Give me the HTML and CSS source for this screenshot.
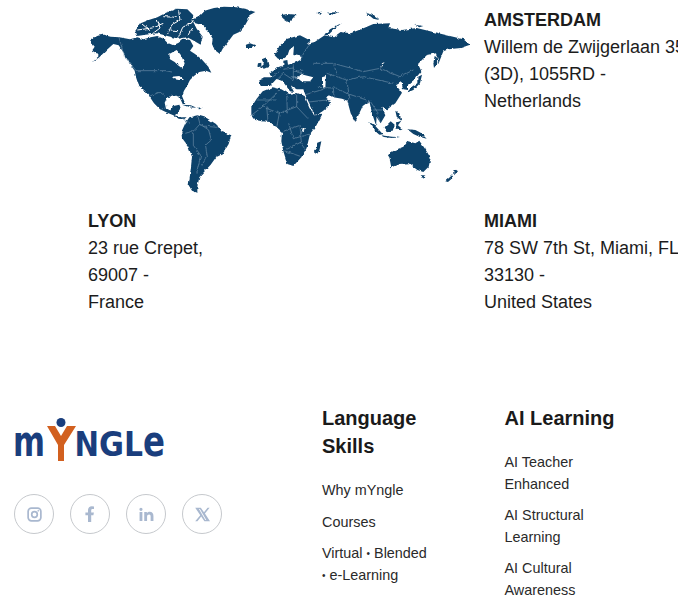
FILE: index.html
```html
<!DOCTYPE html>
<html lang="en">
<head>
    <meta charset="UTF-8">
    <meta name="viewport" content="width=device-width, initial-scale=1.0">
    <title>mYngle</title>
    <link rel="stylesheet" href="styles.css">
</head>
<body>
    <section class="offices">
        <div class="map-cell">
            <svg class="map" viewBox="24 0 1176 600" width="392" height="200" aria-label="World map">
                <defs>
                    <filter id="rough" filterUnits="userSpaceOnUse" x="0" y="0" width="1200" height="600">
                        <feTurbulence type="fractalNoise" baseFrequency="0.07" numOctaves="3" seed="4"/>
                        <feDisplacementMap in="SourceGraphic" scale="9" xChannelSelector="R" yChannelSelector="G"/>
                        <feGaussianBlur stdDeviation="0.7"/>
                    </filter>
                </defs>
                <g filter="url(#rough)">
                <g class="land">
                    <!-- north america -->
                    <path d="M30,122 L48,108 L70,104 L92,110 L118,112 L150,118 L172,112 L190,118 L212,112 L232,108 L250,116 L262,128 L280,136 L296,128 L310,116 L330,120 L340,138 L330,152 L345,162 L365,178 L385,200 L394,218 L378,212 L358,216 L342,228 L330,240 L322,256 L312,272 L306,288 L316,312 L308,312 L298,290 L280,286 L262,292 L254,308 L258,326 L270,332 L280,318 L298,314 L302,324 L292,340 L284,346 L304,352 L320,352 L312,358 L296,356 L280,346 L262,338 L240,328 L222,310 L206,286 L192,270 L176,256 L168,232 L164,212 L148,190 L132,160 L116,136 L100,132 L80,150 L58,172 L38,186 L56,168 L50,160 L36,152 L44,140 Z"/>
                    <!-- arctic islands -->
                    <path d="M166,92 L182,70 L206,60 L232,52 L258,38 L290,26 L322,28 L340,46 L338,62 L350,86 L368,110 L362,134 L344,124 L322,112 L296,116 L262,108 L232,100 L196,104 L172,108 Z"/>
                    <!-- greenland and north atlantic -->
                    <path d="M338,58 L360,48 L374,32 L402,24 L432,20 L470,22 L500,28 L526,36 L508,46 L504,60 L494,78 L478,96 L460,104 L444,126 L428,146 L420,162 L404,150 L396,132 L398,116 L384,92 L368,76 L346,70 Z"/>
                    <path d="M494,136 L510,130 L526,136 L516,144 L498,144 Z M600,46 L622,42 L650,44 L640,56 L628,68 L612,58 Z M712,40 L726,38 L722,44 Z M740,38 L775,36 L760,44 Z M858,38 L876,44 L898,60 L880,56 Z M736,104 L750,88 L786,68 L764,86 L744,106 Z M1002,74 L1030,78 L1018,82 Z"/>
                    <path d="M545,178 L560,172 L566,200 L552,206 L540,204 L552,192 Z M534,190 L544,188 L544,200 L532,200 Z"/>
                    <!-- eurasia -->
                    <path d="M538,240 L552,232 L574,232 L568,218 L588,204 L610,196 L610,182 L622,180 L624,194 L650,186 L664,178 L660,166 L640,162 L642,138 L628,150 L622,168 L608,178 L594,176 L584,166 L598,138 L622,116 L660,106 L692,122 L680,132 L704,126 L734,106 L760,112 L782,96 L812,100 L852,84 L880,72 L930,70 L926,84 L966,90 L1010,84 L1060,96 L1110,108 L1150,118 L1170,134 L1142,144 L1106,148 L1090,154 L1076,190 L1068,160 L1040,166 L1014,192 L1024,214 L1004,238 L984,254 L984,270 L970,268 L964,246 L948,256 L966,278 L946,310 L922,328 L904,320 L916,346 L902,370 L890,352 L888,376 L876,340 L868,304 L848,318 L826,366 L812,340 L802,302 L786,296 L760,292 L746,286 L738,298 L756,304 L748,318 L712,346 L700,336 L686,306 L676,284 L670,268 L650,268 L640,262 L632,256 L642,276 L630,274 L608,244 L590,236 L570,258 L542,258 Z"/>
                    <!-- africa -->
                    <path d="M514,322 L530,296 L548,274 L578,262 L604,268 L628,282 L650,278 L674,288 L688,320 L702,346 L726,344 L708,378 L690,402 L680,444 L664,472 L640,498 L622,492 L610,454 L604,424 L606,396 L590,382 L570,366 L546,364 L526,360 L514,344 Z"/>
                    <!-- south america -->
                    <path d="M304,396 L316,370 L328,352 L352,346 L380,354 L408,372 L426,396 L454,406 L446,432 L428,462 L408,472 L392,494 L372,516 L358,532 L352,560 L352,578 L336,572 L326,556 L332,510 L336,470 L324,438 L306,414 Z"/>
                    <!-- caribbean -->
                    <path d="M306,314 L332,316 L352,324 L328,322 Z M356,322 L368,326 L356,328 Z"/>
                    <!-- oceania, asia islands -->
                    <path d="M924,462 L946,450 L970,440 L984,424 L1006,430 L1018,422 L1036,448 L1052,474 L1046,500 L1030,516 L1012,510 L986,490 L958,492 L934,502 L930,482 Z"/>
                    <path d="M1022,526 L1036,526 L1030,536 Z M1124,506 L1134,514 L1122,526 Z M1116,526 L1120,532 L1104,546 L1096,544 Z"/>
                    <path d="M712,428 L724,424 L718,452 L708,466 L702,456 Z"/>
                    <path d="M868,366 L884,376 L908,402 L898,404 L880,388 Z M902,406 L936,410 L960,412 L936,414 L906,410 Z M914,382 L932,364 L944,374 L938,392 L920,394 Z M948,368 L964,362 L954,376 L968,388 L950,386 Z M982,388 L1006,390 L1022,398 L1040,416 L1018,410 L1000,402 Z M946,332 L958,340 L964,362 L950,350 Z M1064,168 L1070,172 L1072,190 L1062,204 L1060,190 Z M1012,232 L1026,224 L1020,250 L1000,270 L980,278 L998,258 L1012,250 Z"/>
                </g>
                <g class="water">
                    <path d="M268,162 L290,150 L302,164 L314,190 L308,206 L294,196 L284,186 L270,178 Z"/>
                    <path d="M648,230 L670,224 L700,232 L690,244 L664,244 Z M726,232 L738,228 L736,262 L726,254 Z M275,230 L298,228 L312,240 L296,240 L284,238 Z M668,384 L674,384 L672,396 L666,394 Z M906,190 L914,186 L900,204 Z"/>
                </g>
                <path class="channels" d="M172,90 L216,84 L250,70 M214,104 L240,84 L232,60 M262,104 L276,74 L300,60 L296,34 M296,110 L308,82 L340,64 M250,50 L290,52 M322,108 L338,84 M186,72 L210,92 M272,90 L292,92"/>
                <path class="borders" d="M116,112 L134,170 L168,212 L256,212 L276,216 M205,290 L240,276 L254,288 M240,330 L262,316 M304,352 L330,370 M316,400 L342,392 L360,372 L386,390 L394,420 L376,436 L382,470 L366,494 M340,400 L340,436 L362,466 L350,520 M368,378 L412,382 M354,350 L360,372 M514,346 L548,320 L600,270 M546,320 L598,340 L650,320 L650,280 M598,340 L590,382 M650,320 L684,356 M604,396 L660,376 L664,426 L620,448 M626,370 L640,416 L690,402 M660,426 L674,446 M612,452 L664,470 M530,300 L590,300 M560,320 L564,364 M620,280 L622,340 M640,196 L640,240 L610,220 L590,240 M660,178 L690,130 M670,210 L640,216 M610,208 L640,204 L668,226 M600,216 L576,232 M630,230 L660,230 M700,190 L760,190 L850,215 L900,205 L960,230 L1000,210 M740,220 L800,240 L850,230 L940,250 M760,190 L770,220 M800,240 L810,300 M760,260 L800,280 L860,300 M676,284 L730,268 M686,306 L740,300 M712,262 L760,264 M760,264 L762,292 M868,300 L895,340 M880,330 L915,330 M890,340 L900,365"/>
                </g>
            </svg>
        </div>
        <div class="office office-first">
            <strong>AMSTERDAM</strong>
            <p>Willem de Zwijgerlaan 350<br>(3D), 1055RD -<br>Netherlands</p>
        </div>
        <div class="office">
            <strong>LYON</strong>
            <p>23 rue Crepet,<br>69007 -<br>France</p>
        </div>
        <div class="office">
            <strong>MIAMI</strong>
            <p>78 SW 7th St, Miami, FL<br>33130 -<br>United States</p>
        </div>
    </section>

    <footer class="footer">
        <div class="brand">
            <svg class="logo" viewBox="0 0 152 44" width="152" height="44" role="img" aria-label="mYngle">
                <text class="logo-low" x="-1" y="37" textLength="32" lengthAdjust="spacingAndGlyphs">m</text>
                <path class="logo-y" d="M33,7 L41,7 L47,17 L53,7 L62,7 L50,26 L50,42 L44,42 L44,26 Z"/>
                <circle class="logo-dot" cx="47" cy="3.5" r="4.5"/>
                <text class="logo-cap" x="60.5" y="37" textLength="24.5" lengthAdjust="spacingAndGlyphs">N</text>
                <text class="logo-cap" x="85" y="37" textLength="25" lengthAdjust="spacingAndGlyphs">G</text>
                <text class="logo-cap" x="110" y="37" textLength="19" lengthAdjust="spacingAndGlyphs">L</text>
                <text class="logo-low" x="129" y="37" textLength="22" lengthAdjust="spacingAndGlyphs">e</text>
            </svg>
            <div class="socials">
                <a class="social" href="#" aria-label="Instagram">
                    <svg viewBox="0 0 16 16" width="15" height="15"><rect x="1.2" y="1.2" width="13.6" height="13.6" rx="3.5" fill="none" stroke="#a9b8cf" stroke-width="1.8"/><circle cx="8" cy="8" r="3" fill="none" stroke="#a9b8cf" stroke-width="1.8"/><circle cx="12" cy="4" r="0.9" fill="#a9b8cf"/></svg>
                </a>
                <a class="social" href="#" aria-label="Facebook">
                    <svg viewBox="0 0 16 16" width="16" height="16"><path fill="#a9b8cf" d="M6,16 L6,9.2 L3.4,9.2 L3.4,6.4 L6,6.4 L6,4.2 C6,1.6 7.5,0.2 9.8,0.2 L12,0.4 L12,2.9 L10.6,2.9 C9.5,2.9 9.2,3.5 9.2,4.3 L9.2,6.4 L11.9,6.4 L11.4,9.2 L9.2,9.2 L9.2,16 Z"/></svg>
                </a>
                <a class="social" href="#" aria-label="LinkedIn">
                    <svg viewBox="0 0 16 16" width="15" height="15"><path fill="#a9b8cf" d="M0.6,5.4 L3.6,5.4 L3.6,15 L0.6,15 Z M2.1,0.8 A1.7,1.7 0 1 1 2.1,4.2 A1.7,1.7 0 1 1 2.1,0.8 Z M5.6,5.4 L8.4,5.4 L8.4,6.7 C9,5.7 10,5.1 11.4,5.1 C14.2,5.1 15.4,6.8 15.4,9.6 L15.4,15 L12.4,15 L12.4,10.2 C12.4,8.8 12,7.9 10.8,7.9 C9.5,7.9 8.6,8.8 8.6,10.3 L8.6,15 L5.6,15 Z"/></svg>
                </a>
                <a class="social" href="#" aria-label="X">
                    <svg viewBox="0 0 16 16" width="15" height="15"><path fill="#a9b8cf" fill-rule="evenodd" d="M0.2,0.8 L6.2,0.8 L9.6,5.6 L13.4,0.8 L15.6,0.8 L10.6,6.9 L16,15.2 L10,15.2 L6.6,10.2 L2.6,15.2 L0.2,15.2 L5.6,8.8 Z M4.2,2.2 L11,13.8 L12,13.8 L5.2,2.2 Z"/></svg>
                </a>
            </div>
        </div>
        <nav class="links links-skills">
            <h3>Language Skills</h3>
            <ul>
                <li>Why mYngle</li>
                <li>Courses</li>
                <li>Virtual <span class="dot">•</span> Blended <span class="dot">•</span> e-Learning</li>
            </ul>
        </nav>
        <nav class="links">
            <h3>AI Learning</h3>
            <ul>
                <li>AI Teacher Enhanced</li>
                <li>AI Structural Learning</li>
                <li>AI Cultural Awareness</li>
            </ul>
        </nav>
    </footer>
</body>
</html>
```

FILE: styles.css
```css
html, body {
    margin: 0;
    background: #ffffff;
    overflow: hidden;
}
body {
    font-family: "Liberation Sans", Arial, sans-serif;
    color: #1c1c1c;
    width: 678px;
    height: 602px;
}
.offices {
    display: grid;
    grid-template-columns: 396px 194px;
    grid-template-rows: 208px auto;
    padding-left: 88px;
    overflow: hidden;
}
.map {
    display: block;
}
.land {
    fill: #10426a;
}
.water {
    fill: #ffffff;
}
.channels {
    fill: none;
    stroke: #ffffff;
    stroke-width: 3;
}
.borders {
    fill: none;
    stroke: #7fa0b8;
    stroke-width: 1.6;
    stroke-linejoin: round;
}
.office {
    font-size: 18px;
    line-height: 27px;
    white-space: nowrap;
}
.office-first {
    padding-top: 7px;
}
.office p {
    margin: 0;
}
.footer {
    display: grid;
    grid-template-columns: 308px 182.5px 1fr;
    margin-top: 88px;
    padding-left: 14px;
}
.logo {
    display: block;
    margin-top: 15px;
    overflow: visible;
}
.logo-low, .logo-cap {
    font-family: "DejaVu Sans", sans-serif;
    font-weight: bold;
    fill: #1a3e7d;
}
.logo-low {
    font-size: 42px;
}
.logo-cap {
    font-size: 33px;
}
.logo-y {
    fill: #d2601f;
}
.logo-dot {
    fill: #1a3e7d;
}
.socials {
    display: flex;
    gap: 16px;
    margin-top: 31px;
}
.social {
    width: 40px;
    height: 40px;
    box-sizing: border-box;
    border: 1px solid #c6c9cd;
    border-radius: 50%;
    display: flex;
    align-items: center;
    justify-content: center;
}
.links h3 {
    margin: 0 0 19px;
    max-width: 130px;
    font-size: 20px;
    line-height: 28px;
    font-weight: bold;
    color: #1a1a1a;
}
.links ul {
    margin: 0;
    padding: 0;
    list-style: none;
    max-width: 110px;
}
.links li {
    font-size: 14.4px;
    line-height: 22px;
    margin-bottom: 9.2px;
    color: #2a2a2a;
}
.links-skills li {
    margin-bottom: 9.6px;
}
.dot {
    font-size: 10px;
    line-height: 1;
    vertical-align: 1px;
}
```
